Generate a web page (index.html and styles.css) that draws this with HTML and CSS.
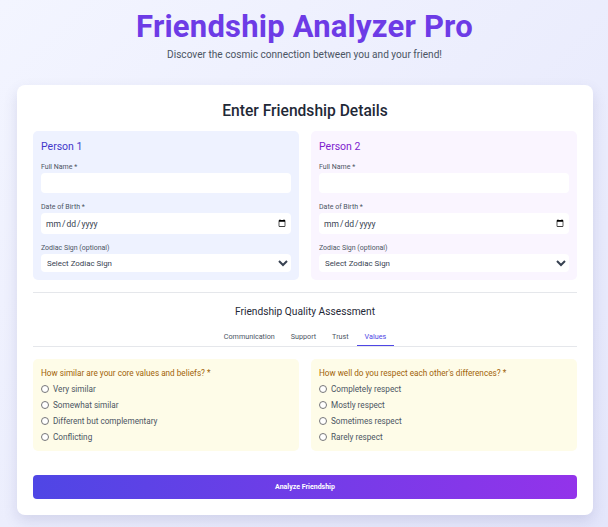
FILE: index.html
```html
<!DOCTYPE html>
<html lang="en">
<head>
    <meta charset="UTF-8">
    <meta name="viewport" content="width=device-width, initial-scale=1.0">
    <title>Friendship Analyzer Pro</title>
    <link rel="stylesheet" href="styles.css">
</head>
<body>
    <header class="page-header">
        <h1>Friendship Analyzer Pro</h1>
        <p>Discover the cosmic connection between you and your friend!</p>
    </header>

    <form class="card">
        <h2>Enter Friendship Details</h2>

        <div class="two-col">
            <section class="person person-1">
                <h3>Person 1</h3>
                <label class="field-label" for="name1">Full Name *</label>
                <input class="field field-text" id="name1" type="text">
                <label class="field-label" for="dob1">Date of Birth *</label>
                <input class="field field-date" id="dob1" type="date">
                <label class="field-label" for="sign1">Zodiac Sign (optional)</label>
                <select class="field field-select" id="sign1">
                    <option>Select Zodiac Sign</option>
                </select>
            </section>
            <section class="person person-2">
                <h3>Person 2</h3>
                <label class="field-label" for="name2">Full Name *</label>
                <input class="field field-text" id="name2" type="text">
                <label class="field-label" for="dob2">Date of Birth *</label>
                <input class="field field-date" id="dob2" type="date">
                <label class="field-label" for="sign2">Zodiac Sign (optional)</label>
                <select class="field field-select" id="sign2">
                    <option>Select Zodiac Sign</option>
                </select>
            </section>
        </div>

        <div class="assessment">
            <h4>Friendship Quality Assessment</h4>
            <div class="tabs">
                <button type="button" class="tab">Communication</button>
                <button type="button" class="tab">Support</button>
                <button type="button" class="tab">Trust</button>
                <button type="button" class="tab tab-active">Values</button>
            </div>
            <div class="two-col">
                <fieldset class="question">
                    <legend>How similar are your core values and beliefs? *</legend>
                    <label class="option"><input type="radio" name="q1"> Very similar</label>
                    <label class="option"><input type="radio" name="q1"> Somewhat similar</label>
                    <label class="option"><input type="radio" name="q1"> Different but complementary</label>
                    <label class="option"><input type="radio" name="q1"> Conflicting</label>
                </fieldset>
                <fieldset class="question">
                    <legend>How well do you respect each other's differences? *</legend>
                    <label class="option"><input type="radio" name="q2"> Completely respect</label>
                    <label class="option"><input type="radio" name="q2"> Mostly respect</label>
                    <label class="option"><input type="radio" name="q2"> Sometimes respect</label>
                    <label class="option"><input type="radio" name="q2"> Rarely respect</label>
                </fieldset>
            </div>
        </div>

        <button type="button" class="submit">Analyze Friendship</button>
    </form>
</body>
</html>
```

FILE: styles.css
```css
* {
    box-sizing: border-box;
}
html {
    height: 100%;
}
body {
    margin: 0;
    min-height: 100%;
    padding: 8px 15px 12px 17px;
    font-family: Roboto, "Noto Sans", sans-serif;
    background: linear-gradient(135deg, #f3f5ff, #e4e6fb);
    color: #1f2937;
}
.page-header {
    text-align: center;
    height: 77px;
    padding-right: 1px;
    padding-top: 1px;
}
.page-header h1 {
    margin: 0;
    font-size: 31px;
    line-height: 36px;
    font-weight: 700;
    letter-spacing: 0.2px;
    color: #6d3be6;
}
.page-header p {
    margin: 3px 0 0;
    font-size: 10.1px;
    line-height: 14px;
    color: #4b5563;
}
.card {
    background: #fff;
    border-radius: 8px;
    padding: 16px;
    height: 430px;
    box-shadow: 0 6px 14px rgba(80, 80, 140, 0.16);
}
.card h2 {
    margin: 0 0 10px;
    font-size: 15.6px;
    line-height: 20px;
    font-weight: 500;
    text-align: center;
    color: #1f2937;
}
.two-col {
    display: grid;
    grid-template-columns: 266px 266px;
    gap: 12px;
}
.person {
    height: 149px;
    padding: 8px;
    border-radius: 5px;
}
.person-1 {
    background: #eef2ff;
}
.person-2 {
    background: #faf5ff;
}
.person h3 {
    margin: 0 0 7px;
    font-size: 10.5px;
    line-height: 15px;
    font-weight: 400;
}
.person-1 h3 {
    color: #4338ca;
}
.person-2 h3 {
    color: #7e22ce;
}
.field-label {
    display: block;
    padding: 1px 0;
    font-size: 7px;
    line-height: 10px;
    color: #4b5563;
}
.field {
    display: block;
    width: 100%;
    border: none;
    border-radius: 4px;
    background: #fff;
    color: #374151;
    font-family: inherit;
}
.field-text {
    height: 20px;
    margin-bottom: 8px;
}
.field-date {
    height: 21px;
    margin-bottom: 8px;
    padding: 0 3px 0 4px;
    font-size: 8.5px;
}
.field-select {
    height: 18px;
    padding: 0 2px;
    font-size: 7.9px;
}
.assessment {
    margin-top: 12px;
    padding-top: 12px;
    border-top: 1px solid #e5e7eb;
}
.assessment h4 {
    margin: 0 0 8px;
    font-size: 10.2px;
    line-height: 14px;
    font-weight: 400;
    text-align: center;
    color: #1f2937;
}
.tabs {
    display: flex;
    justify-content: center;
    border-bottom: 1px solid #e5e7eb;
    margin-bottom: 12px;
}
.tab {
    height: 19px;
    padding: 0 8px;
    border: none;
    border-bottom: 1px solid transparent;
    background: none;
    font-family: inherit;
    font-size: 7.2px;
    color: #4b5563;
}
.tab-active {
    border-bottom-color: #4f46e5;
    color: #4f46e5;
}
.question {
    height: 92px;
    margin: 0;
    padding: 8px;
    border: none;
    border-radius: 5px;
    background: #fefce8;
}
.question legend {
    float: left;
    width: 100%;
    padding: 0;
    margin-bottom: 2px;
    font-size: 8.2px;
    line-height: 12px;
    color: #a16207;
}
.option {
    clear: both;
    display: flex;
    align-items: center;
    gap: 4px;
    height: 16px;
    font-size: 8.2px;
    color: #4b5563;
}
.option input {
    width: 8px;
    height: 8px;
    margin: 0;
}
.submit {
    display: block;
    width: 100%;
    height: 24px;
    margin-top: 24px;
    padding-top: 1px;
    border: none;
    border-radius: 4px;
    background: linear-gradient(90deg, #4f46e5, #9333ea);
    color: #fff;
    font-family: inherit;
    font-size: 7px;
    font-weight: 700;
}
```
